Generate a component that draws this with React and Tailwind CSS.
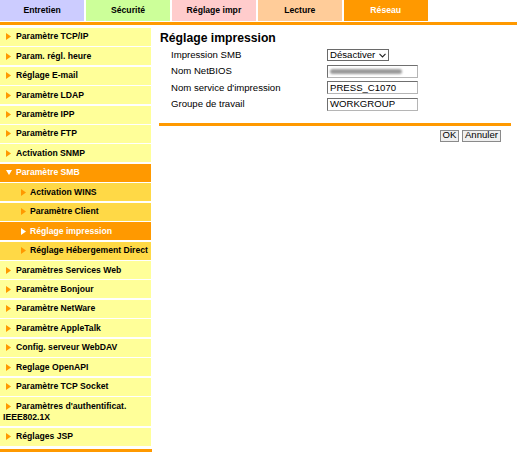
import React from 'react'

const tabs = [
  { name: 'Entretien', cls: 'bg-[#ccccff] text-black' },
  { name: 'Sécurité', cls: 'bg-[#ccff99] text-black' },
  { name: 'Réglage impr', cls: 'bg-[#ffcccc] text-black' },
  { name: 'Lecture', cls: 'bg-[#ffcc99] text-black' },
  { name: 'Réseau', cls: 'bg-[#ff9900] text-white' },
]

const menu = [
  { name: 'Paramètre TCP/IP' },
  { name: 'Param. régl. heure' },
  { name: 'Réglage E-mail' },
  { name: 'Paramètre LDAP' },
  { name: 'Paramètre IPP' },
  { name: 'Paramètre FTP' },
  { name: 'Activation SNMP' },
  { name: 'Paramètre SMB', open: true },
  { name: 'Activation WINS', sub: true },
  { name: 'Paramètre Client', sub: true },
  { name: 'Réglage impression', sub: true, active: true },
  { name: 'Réglage Hébergement Direct', sub: true },
  { name: 'Paramètres Services Web' },
  { name: 'Paramètre Bonjour' },
  { name: 'Paramètre NetWare' },
  { name: 'Paramètre AppleTalk' },
  { name: 'Config. serveur WebDAV' },
  { name: 'Reglage OpenAPI' },
  { name: 'Paramètre TCP Socket' },
  { name: "Paramètres d'authentificat. IEEE802.1X", wrap: true },
  { name: 'Réglages JSP' },
]

function Arrow({ white }) {
  return (
    <svg width="5" height="7" viewBox="0 0 5 7" className="shrink-0">
      <polygon points="0,0 5,3.5 0,7" fill={white ? '#ffffff' : '#ff9900'} />
    </svg>
  )
}

function Down() {
  return (
    <svg width="6" height="5" viewBox="0 0 6 5" className="shrink-0">
      <polygon points="0,0 6,0 3,5" fill="#ffffff" />
    </svg>
  )
}

function MenuRow({ item }) {
  if (item.wrap) {
    return (
      <div className="bg-[#ffff99] pl-[3px] pr-[2px] py-[4px] leading-[10.5px] text-black">
        <span className="inline-block w-[13px] pl-[3px]">
          <span className="inline-block align-middle">
            <Arrow />
          </span>
        </span>
        Paramètres d'authentificat. IEEE802.1X
      </div>
    )
  }
  let bg = 'bg-[#ffff99] text-black'
  if (item.sub) bg = 'bg-[#ffd946] text-black'
  if (item.open || item.active) bg = 'bg-[#ff9900] text-white'
  return (
    <div
      className={`flex h-[18px] items-center whitespace-nowrap ${bg} ${
        item.sub ? 'pl-[21px] gap-[4px]' : item.open ? 'pl-[6px] gap-[4px]' : 'pl-[6px] gap-[5px]'
      }`}
    >
      {item.open ? <Down /> : <Arrow white={item.active} />}
      <span>{item.name}</span>
    </div>
  )
}

function Field({ children, wide = true }) {
  return (
    <div
      className={`flex h-[13px] items-center border border-t-[#6f6f6f] border-l-[#6f6f6f] border-b-[#b5b5b5] border-r-[#b5b5b5] bg-white pl-[2px] ${
        wide ? 'w-[91px]' : ''
      }`}
    >
      {children}
    </div>
  )
}

export default function App() {
  return (
    <div className="w-[517px] h-[469px] bg-white font-['Liberation_Sans',Arial,sans-serif] overflow-hidden">
      {/* Tabs */}
      <div className="flex h-[21px] gap-[1.6px]">
        {tabs.map((t) => (
          <div
            key={t.name}
            className={`flex w-[84.3px] items-center justify-center text-[8.65px] font-bold ${t.cls}`}
          >
            {t.name}
          </div>
        ))}
      </div>
      <div className="mt-[1.2px] h-[3px] bg-[#ff9900]" />

      <div className="mt-[2.6px] flex">
        {/* Sidebar */}
        <div className="w-[151px] shrink-0">
          <div className="flex flex-col gap-[1.44px] text-[8.65px] font-bold">
            {menu.map((m) => (
              <MenuRow key={m.name} item={m} />
            ))}
          </div>
          <div className="mt-[3px] h-[3.4px] w-[152px] bg-[#ff9900]" />
        </div>

        {/* Main */}
        <div className="flex-1 pt-[3px]">
          <div className="pl-[9px] text-[12.2px] font-bold leading-[14px] text-black">Réglage impression</div>
          <div className="mt-[2.4px] pl-[20px] text-[9.6px] text-black">
            <div className="flex h-[16.3px] items-center">
              <div className="w-[156px]">Impression SMB</div>
              <div className="flex h-[12px] w-[62px] items-center gap-[4px] border border-[#6a6a6a] bg-white pl-[2px]">
                <span>Désactiver</span>
                <svg width="7" height="5" viewBox="0 0 7 5">
                  <polyline points="0.5,0.8 3.5,4 6.5,0.8" fill="none" stroke="#222" strokeWidth="1.1" />
                </svg>
              </div>
            </div>
            <div className="flex h-[16.3px] items-center">
              <div className="w-[156px]">Nom NetBIOS</div>
              <Field>
                <span className="block h-[5px] w-[72px] rounded-full bg-[#9a9a9a] blur-[1.2px]" />
              </Field>
            </div>
            <div className="flex h-[16.3px] items-center">
              <div className="w-[156px]">Nom service d'impression</div>
              <Field>PRESS_C1070</Field>
            </div>
            <div className="flex h-[16.3px] items-center">
              <div className="w-[156px]">Groupe de travail</div>
              <Field>WORKGROUP</Field>
            </div>
          </div>
          <div className="ml-[8px] mr-[6px] mt-[10.3px] h-[3px] bg-[#ff9900]" />
          <div className="mr-[16px] mt-[4px] flex justify-end gap-[3px] text-[9.6px] text-black">
            <div className="flex h-[12px] w-[19px] items-center justify-center border border-[#8a8a8a] bg-[#efefef]">OK</div>
            <div className="flex h-[12px] w-[39px] items-center justify-center border border-[#8a8a8a] bg-[#efefef]">Annuler</div>
          </div>
        </div>
      </div>
    </div>
  )
}
